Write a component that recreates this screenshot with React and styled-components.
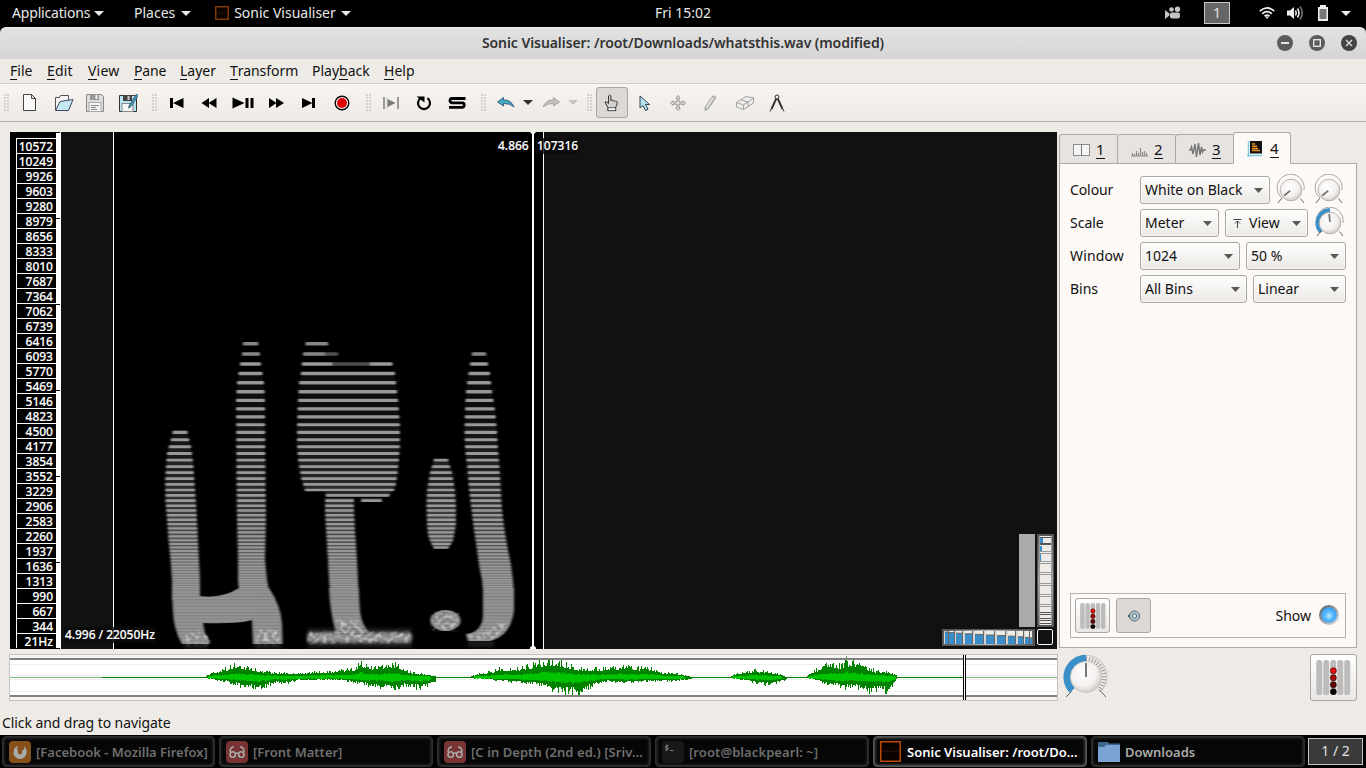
import React from 'react';
import styled, { createGlobalStyle, css } from 'styled-components';

const Global = createGlobalStyle`
  * { box-sizing: border-box; }
  body { margin: 0; background: #eeebe6; overflow: hidden; }
  svg { display: block; flex: none; }
`;

const Desktop = styled.div`
  width: 1366px;
  height: 768px;
  display: flex;
  flex-direction: column;
  background: #eeebe6;
  color: #111;
  font-family: "Noto Sans", "Open Sans", sans-serif;
  font-size: 14px;
  line-height: 20px;
  white-space: nowrap;
`;

/* ---------- desktop top bar ---------- */
const TopBar = styled.header`
  height: 27px;
  flex: none;
  display: grid;
  grid-template-columns: 1fr auto 1fr;
  align-items: center;
  background: #000;
  color: #e8e8e6;
  padding-bottom: 1px;
`;
const TopLeft = styled.div`
  display: flex;
  align-items: center;
  padding-left: 12px;
`;
const TopItem = styled.div`
  display: flex;
  align-items: center;
  justify-content: space-between;
  width: ${p => p.$w}px;
  margin-right: ${p => p.$after || 0}px;
  letter-spacing: ${p => p.$ls || 0}px;
`;
const Clock = styled.div`letter-spacing: 0;`;
const Tray = styled.div`
  display: flex;
  align-items: center;
  justify-content: flex-end;
  padding-right: 15px;
`;
const Workspace = styled.div`
  width: 26px;
  height: 22px;
  margin: 0 29px 0 23px;
  border: 1px solid #c8c8c8;
  background: #666;
  text-align: center;
  line-height: 19px;
`;
const TraySlot = styled.span`margin-left: ${p => p.$gap}px;`;

/* ---------- window chrome ---------- */
const TitleWrap = styled.div`background: #000; flex: none;`;
const TitleBar = styled.div`
  height: 32px;
  display: flex;
  align-items: center;
  justify-content: center;
  position: relative;
  padding: 0 0 2px;
  border-radius: 6px 6px 0 0;
  border-top: 1px solid #efefef;
  background: linear-gradient(#e2e2e2, #d5d5d5);
  color: #333;
  font-weight: 600;
  letter-spacing: ${p => p.$ls}px;
`;
const WindowButtons = styled.div`
  position: absolute;
  right: 9px;
  top: 7px;
  display: flex;
  gap: 16px;
`;
const MenuBar = styled.nav`
  height: 25px;
  flex: none;
  display: flex;
  align-items: center;
  padding-left: 10px;
  border-bottom: 1px solid #d0cdca;
`;
const MenuItem = styled.div`
  width: ${p => p.$w}px;
  letter-spacing: ${p => p.$ls || 0}px;
`;
const Key = styled.span`
  display: inline-block;
  line-height: 17px;
  border-bottom: 1px solid #111;
`;
const ToolBar = styled.div`
  height: 38px;
  flex: none;
  display: flex;
  align-items: center;
  border-bottom: 1px solid #b5b1ad;
  background: linear-gradient(#f8f5f0, #edeae5);
`;
const Tool = styled.div`
  width: ${p => p.$w || 20}px;
  height: 20px;
  margin-left: ${p => p.$gap}px;
  display: flex;
  align-items: center;
  justify-content: center;
  ${p => p.$active && css`
    height: 31px;
    border: 1px solid #a9a5a2;
    border-radius: 3px;
    background: #dcd8d6;
  `}
`;
const Grip = styled.div`
  width: 5px;
  height: 17px;
  margin-left: ${p => p.$gap}px;
  margin-right: 1px;
  background: radial-gradient(circle at 1px 1px, #c2beba 0.6px, transparent 0.9px) 0 0 / 3px 3px;
`;

/* ---------- work area ---------- */
const Work = styled.main`
  flex: none;
  height: 586px;
  display: grid;
  grid-template-columns: 1049px 298px;
  grid-template-rows: 517px 47px;
  column-gap: 1px;
  row-gap: 5px;
  padding: 10px 0 0 9px;
`;
const Pane = styled.section`
  position: relative;
  margin: 0 1px;
  display: flex;
  background: #000;
  font-size: 12px;
  font-weight: 500;
  color: #fff;
`;
const Scale = styled.div`
  width: 46px;
  flex: none;
  border-left: 6px solid #000;
  padding-top: 6px;
  -webkit-text-stroke: 0.15px #fff;
`;
const ScaleRow = styled.div`
  height: 15px;
  border-top: 1px solid #fff;
  border-left: 1px solid #fff;
  padding-right: 3px;
  line-height: 15px;
  text-align: right;
`;
const ScaleEdge = styled.div`
  width: 5px;
  flex: none;
  background: repeating-linear-gradient(#000 0 1px, #fff 1px 86px);
  border-right: 1px solid #fff;
`;
const Overlay = styled.div`
  position: absolute;
  left: ${p => p.$x}px;
  top: ${p => p.$y}px;
  height: 16px;
  line-height: 16px;
  padding: 0 1px;
  background: ${p => p.$bg || 'transparent'};
  letter-spacing: ${p => p.$ls || 0}px;
  -webkit-text-stroke: 0.15px #fff;
`;
const WheelDock = styled.div`
  position: absolute;
  right: 3px;
  bottom: 3px;
  display: grid;
  grid-template-columns: 93px 17px;
  grid-template-rows: 93px 17px;
  gap: 2px;
`;
const ZoomTrack = styled.div`
  width: 16px;
  height: 93px;
  justify-self: end;
  background: #aaaaa8;
`;
const ResetBox = styled.div`
  width: 16px;
  height: 16px;
  border: 1px solid #fff;
  border-radius: 2px;
  background: #111;
`;
const Overview = styled.section`
  height: 47px;
  border: 1px solid #c5c2bf;
  background: #fff;
`;

/* ---------- property side ---------- */
const Side = styled.aside`display: flex; flex-direction: column; height: 516px;`;
const Tabs = styled.div`
  height: 32px;
  display: flex;
  align-items: flex-end;
  position: relative;
  margin-bottom: -1px;
`;
const Tab = styled.div`
  width: 58px;
  height: 30px;
  display: flex;
  align-items: center;
  gap: 6px;
  padding: 1px 0 0 13px;
  border: 1px solid #aeaaa7;
  border-right-width: 0;
  border-radius: 3px 0 0 0;
  background: #e6e3e0;
  font-size: 15px;
  ${p => p.$on && css`
    height: 32px;
    border-right-width: 1px;
    border-bottom-color: #fdf9f7;
    border-radius: 3px 3px 0 0;
    background: #fdf9f7;
  `}
`;
const Panel = styled.div`
  flex: 1;
  display: flex;
  flex-direction: column;
  justify-content: space-between;
  border: 1px solid #aeaaa7;
  background: #fdf9f7;
  padding: 12px 10px 9px;
`;
const Props = styled.div`display: flex; flex-direction: column; gap: 5px;`;
const PropRow = styled.div`
  display: flex;
  align-items: center;
  height: 28px;
`;
const PropName = styled.div`
  width: 70px;
  flex: none;
  letter-spacing: ${p => p.$ls || 0}px;
`;
const Combo = styled.div`
  width: ${p => p.$w}px;
  height: 28px;
  flex: none;
  margin-right: 6px;
  display: flex;
  align-items: center;
  gap: 5px;
  padding: 0 6px 0 4px;
  border: 1px solid #aba7a4;
  border-radius: 3px;
  background: linear-gradient(#fefefd, #ebe9e6);
  box-shadow: inset 0 0 0 1px #fff8;
`;
const ComboText = styled.span`flex: 1;`;
const KnobSlot = styled.div`
  width: 32px;
  height: 32px;
  flex: none;
  margin-right: 6px;
  margin-left: ${p => p.$shift || 0}px;
`;
const LayerBox = styled.div`
  height: 45px;
  display: flex;
  align-items: center;
  gap: 6px;
  padding: 0 5px 0 4px;
  border: 1px solid #b5b1ae;
`;
const PushButton = styled.div`
  width: ${p => p.$s}px;
  height: ${p => p.$s}px;
  display: flex;
  align-items: center;
  justify-content: center;
  border: 1px solid #aba7a4;
  border-radius: 3px;
  background: ${p => (p.$down ? '#dcd8d6' : 'linear-gradient(#fff, #e9e7e5)')};
`;
const ShowText = styled.div`
  margin-left: auto;
  margin-right: 1px;
`;
const BottomRight = styled.div`
  display: flex;
  justify-content: space-between;
  align-items: flex-start;
  padding-left: 3px;
`;
const StatusBar = styled.div`
  height: 27px;
  flex: none;
  padding: 5px 2px 0;
  letter-spacing: -0.08px;
`;

/* ---------- task bar ---------- */
const TaskBar = styled.footer`
  height: 33px;
  flex: none;
  display: flex;
  align-items: center;
  gap: 4px;
  padding-left: 2px;
  background: #000;
`;
const Task = styled.div`
  width: ${p => p.$w || 214}px;
  height: 31px;
  display: flex;
  align-items: center;
  padding-left: 6px;
  gap: ${p => p.$gap || 5}px;
  border: 1px solid ${p => (p.$on ? '#555' : '#2e2e2e')};
  border-radius: 4px;
  box-shadow: inset 0 0 3px 1px ${p => (p.$on ? '#666' : '#3a3a3a')};
  background: #060606;
  color: ${p => p.$color || '#6e6e6e'};
  font-size: 13px;
  font-weight: 600;
  letter-spacing: ${p => p.$ls || 0}px;
  overflow: hidden;
`;
const PageBox = styled.div`
  width: 55px;
  height: 27px;
  margin-left: -1px;
  border: 1px solid #c4c4c4;
  background: #3a3a3a;
  color: #e0e0e0;
  text-align: center;
  line-height: 24px;
`;

/* ---------- small drawings ---------- */
const Down = ({ c = '#5a5754', w = 9, h = 5 }) => (
  <svg width={w} height={h} viewBox="0 0 10 5" preserveAspectRatio="none"><path d="M0 0H10L5 5Z" fill={c} /></svg>
);
const Ico = ({ s = 20, w, children, ...r }) => (
  <svg width={w || s} height={s} viewBox={`0 0 ${w || s} ${s}`} fill="none" {...r}>{children}</svg>
);
const AppIcon = ({ s, c = '#8a3c08' }) => (
  <Ico s={s}>
    <rect x=".75" y=".75" width={s - 1.5} height={s - 1.5} stroke={c} strokeWidth="1.4" fill="#0a0300" />
    <path d={`M2 ${s / 2}H${s - 2}M4 ${s / 2 - 1.5}v3M7 ${s / 2 - 2}v4M10 ${s / 2 - 1.5}v3`} stroke="#2c1206" strokeWidth=".8" />
  </Ico>
);
const WinBtn = ({ children, c = '#5b5b5b' }) => (
  <Ico s={16}><circle cx="8" cy="8" r="8" fill={c} />{children}</Ico>
);

const Knob = ({ blue, angle = 230 }) => {
  const a = ((angle - 90) * Math.PI) / 180;
  return (
    <Ico s={32}>
      <defs>
        <radialGradient id="knobFace" cx=".42" cy=".38" r=".65">
          <stop offset="0" stopColor="#fff" /><stop offset=".65" stopColor="#f3f0ee" /><stop offset="1" stopColor="#ccc8c6" />
        </radialGradient>
      </defs>
      <path d="M7 24A13.5 13.5 0 1 1 29 16" stroke="#aaa6a3" strokeWidth="1" />
      {blue && <path d="M7.4 25A12.8 12.8 0 0 1 16 3.3" stroke="#3a8fc8" strokeWidth="4.4" />}
      <path d="M7 24L3 29M25.500 24.500L29 29" stroke="#555" strokeWidth=".9" />
      <circle cx="16" cy="16" r="10.8" fill="url(#knobFace)" stroke="#aaa6a3" strokeWidth=".8" />
      <path d={`M${16 + Math.cos(a)} ${16 + Math.sin(a)}L${16 + Math.cos(a) * 9} ${16 + Math.sin(a) * 9}`} stroke="#777" strokeWidth="1.8" />
    </Ico>
  );
};

const BigKnob = () => (
  <Ico s={46} w={48}>
    <path d="M9 37A21 21 0 1 1 38.500 37.500" stroke="#bdb9b6" strokeWidth=".8" />
    <path d="M24 5A18.500 18.500 0 0 1 37 36" stroke="#999" strokeWidth="5" strokeDasharray="1 2" />
    <path d="M10.200 36.300A19 19 0 0 1 24 4.200" stroke="#3a8fc8" strokeWidth="7" />
    <circle cx="24" cy="23" r="15.500" fill="url(#knobFace)" stroke="#c5c2bf" strokeWidth=".8" />
    <path d="M9.500 37.500L4 43M37 35.500L44 43" stroke="#555" strokeWidth=".9" />
    <path d="M24 9V23" stroke="#777" strokeWidth="2" />
  </Ico>
);

const Faders = ({ s }) => (
  <svg width={s} height={s} viewBox="0 0 27 27">
    {[0, 1, 2, 3, 4].map(i => <rect key={i} x={0.2 + i * 5.4} y="0" width="4.600" height="27" rx="2" fill="#bdbcbb" />)}
    {['#f01010', '#a80808', '#600404', '#000'].map((c, i) => (
      <circle key={c} cx="13.400" cy={8.3 + i * 5.4} r="2.300" fill={c} stroke="#200" strokeWidth=".5" />
    ))}
  </svg>
);

/* ---------- spectrogram ---------- */
const interp = (pts, x) => {
  if (x < pts[0][0] || x > pts[pts.length - 1][0]) return null;
  for (let i = 1; i < pts.length; i++) {
    if (x <= pts[i][0]) {
      const [p, q] = [pts[i - 1], pts[i]];
      const t = (x - p[0]) / (q[0] - p[0] || 1);
      return p.slice(1).map((v, k) => v + (q[k + 1] - v) * t);
    }
  }
  return null;
};

/* each stroke: [y, left, right] along its height */
const strokes = [
  [[430, 173, 187], [439, 171, 189], [446, 169, 191], [453, 167, 192], [466, 166, 193.5], [482, 165, 194.5], [502, 165.5, 196], [520, 167, 197], [540, 168.5, 198], [560, 170.5, 199], [580, 172, 200], [600, 172, 200]],
  [[342, 243, 258], [354, 242, 260], [364, 240, 261], [383, 237, 264], [400, 236, 265], [480, 236.5, 265.5], [520, 237, 266], [560, 238, 265], [580, 238, 267], [590, 239, 269], [600, 238, 272]],
  [[342, 306, 326], [352, 303, 338], [357, 303, 338], [358, 303, 330], [361.5, 302, 330], [362, 302, 392], [373, 301, 395], [382, 299, 396], [400, 298, 398], [424, 297, 400], [445, 297, 400], [460, 298, 399], [478, 301, 397], [484, 303, 396], [491, 305, 394]],
  [[492, 325, 391], [497, 326, 389]],
  [[498, 325, 354], [510, 325, 354], [530, 326, 355], [560, 328, 357], [580, 329, 358], [600, 331, 359]],
  [[498, 361, 382], [502, 361, 382]],
  [[459, 434, 448], [466, 432, 450], [472, 430, 452], [490, 427, 455], [505, 426.5, 456], [525, 427, 456], [535, 428, 454], [541, 430, 453], [549, 434, 448]],
  [[353, 472, 486], [364, 470, 488], [373, 468.5, 490], [391, 466, 492], [410, 465, 495], [430, 464.5, 497], [450, 465, 498], [465, 467, 499.5], [490, 469, 501], [510, 471.5, 502], [530, 474, 504.5], [550, 477, 508], [565, 479, 511], [580, 482, 513], [600, 484, 514]],
];
const harmonics = Array.from({ length: 50 }, (_, k) => 650.7 - 307 * Math.pow(0.9665, k));
const outline = pts => 'M' + pts.map(p => `${p[1]} ${p[0]}`).join('L') + 'L' + [...pts].reverse().map(p => `${p[2]} ${p[0]}`).join('L') + 'Z';
const lowBodies = [
  'M172 588L200 588L200 596Q222 599 239 588L269 588Q281 606 282 624L282.500 644L253 644L252 620Q238 624 203 623L205 634L210 641L209 644L182 644Q174 630 173 612Z',
  'M329 588L358.500 588L360 612Q362 626 370 633L336 633Q330 612 329 588Z',
  'M483 588L514 588L514 610Q511 636 490 641L468 641L466 634Q484 632 483 612Z',
];

const Spectrogram = () => (
  <svg width="996" height="517" viewBox="61 132 996 517">
    <defs>
      <filter id="soft" x="-5%" y="-5%" width="110%" height="110%"><feGaussianBlur stdDeviation="1.200 0.750" /></filter>
      <filter id="glow" x="-5%" y="-30%" width="110%" height="160%"><feGaussianBlur stdDeviation="1.400 1.700" /></filter>
      <filter id="grain" x="-5%" y="-20%" width="110%" height="140%">
        <feTurbulence type="fractalNoise" baseFrequency=".22 .26" numOctaves="1" seed="7" result="n" />
        <feColorMatrix in="n" type="matrix" values="0 0 0 0 .85  0 0 0 0 .85  0 0 0 0 .85  3 0 0 0 -1.250" result="m" />
        <feGaussianBlur in="SourceGraphic" stdDeviation="1.800" result="s" />
        <feComposite in="m" in2="s" operator="in" />
        <feGaussianBlur stdDeviation=".4" />
      </filter>
      <linearGradient id="fade" gradientUnits="userSpaceOnUse" x1="0" y1="340" x2="0" y2="600">
        <stop offset="0" stopColor="#000" /><stop offset=".3" stopColor="#101010" /><stop offset=".6" stopColor="#2c2c2c" />
        <stop offset=".8" stopColor="#5a5a5a" /><stop offset="1" stopColor="#8e8e8e" />
      </linearGradient>
      <pattern id="ripple" width="4" height="3.200" patternUnits="userSpaceOnUse">
        <path d="M0 1Q2 2.800 4 1" stroke="#555" strokeWidth=".8" fill="none" />
      </pattern>
    </defs>
    <rect x="61" y="132" width="996" height="517" fill="#111" />
    <rect x="113" y="132" width="430" height="517" fill="#000" />
    <g filter="url(#soft)">
      {strokes.map((s, i) => <path key={i} d={outline(s)} fill="url(#fade)" />)}
      {strokes.map((s, i) => harmonics.map((y, k) => {
        const e = interp(s, y);
        if (!e) return null;
        const thick = Math.max(1.2, 3.6 - k * 0.05);
        return <rect key={`${i}-${k}`} x={e[0]} y={y - thick / 2} width={e[1] - e[0]} height={thick} rx="1" fill={k < 2 ? '#868686' : '#989898'} />;
      }))}
      <rect x="332" y="361" width="38" height="5.500" fill="#000" opacity=".5" />
      <rect x="325" y="351.500" width="15" height="5" fill="#000" opacity=".4" />
      {lowBodies.map(d => <path key={d} d={d} fill="#949494" />)}
      <ellipse cx="445.500" cy="620.500" rx="15" ry="10.500" fill="#8c8c8c" />
    </g>
    <g opacity=".5">
      {lowBodies.map(d => <path key={d} d={d} fill="url(#ripple)" />)}
      <ellipse cx="445.500" cy="620.500" rx="13" ry="8.500" fill="url(#ripple)" />
    </g>
    <g filter="url(#glow)">
      <rect x="307" y="632.500" width="105" height="10" rx="4" fill="#8c8c8c" />
      <path d="M308 628h104v4h-104zM308 643h104v5h-104zM184 643h24v6h-24zM254 643h28v6h-28zM468 641h26v6h-26z" fill="#555" opacity=".3" />
    </g>
    <g filter="url(#grain)" opacity=".6">
      <path d="M308 632h103v11h-103zM184 632h20l5 6v6h-24zM256 630h23v14h-23zM336 620h20l10 12h-28zM468 635q20-1 30-12h10q-8 14-18 17h-20zM432 612h26v18h-26z" fill="#fff" />
    </g>
    <path d="M113.500 132V649M543.500 132V649" stroke="#fff" />
    <path d="M533 132V649" stroke="#fff" strokeWidth="2" />
    <path d="M530 132h6l-3 3zM530 649v-1.500l3-2.500 3 2.500v1.500z" fill="#fff" />
  </svg>
);

/* ---------- overview waveform ---------- */
const upEnv = [[205, 1], [213, 5], [220, 7], [232, 11], [237, 14], [245, 11], [252, 9], [262, 6], [275, 5], [290, 4], [305, 4], [312, 6], [330, 6], [345, 8], [355, 9], [361, 17], [365, 12], [378, 11], [390, 14], [398, 14], [402, 8], [415, 4], [425, 3], [436, 1], [470, 1], [480, 4], [490, 6], [500, 9], [515, 9], [530, 12], [547, 17], [560, 16], [575, 10], [590, 9], [605, 9], [620, 12], [635, 10], [650, 10], [662, 5], [675, 4], [690, 1], [730, 1], [740, 5], [755, 7], [770, 5], [785, 1], [806, 1], [815, 7], [826, 14], [840, 13], [846, 17], [847, 21], [848, 15], [852, 17], [862, 12], [875, 7], [890, 5], [897, 1]];
const downEnv = [[205, 1], [210, 1], [225, 4], [245, 10], [258, 12], [275, 5], [285, 6], [300, 2], [340, 2], [360, 6], [370, 9], [380, 10], [395, 13], [405, 8], [420, 11], [435, 6], [436, 1], [480, 1], [500, 3], [520, 5], [540, 8], [555, 14], [578, 17], [590, 10], [605, 4], [625, 5], [640, 5], [650, 3], [665, 4], [685, 2], [692, 1], [735, 1], [750, 4], [765, 7], [775, 6], [787, 1], [812, 1], [825, 6], [847, 11], [860, 11], [868, 16], [880, 12], [887, 16], [892, 8], [897, 1]];
let seed = 11;
const rnd = () => { seed = (seed * 16807) % 2147483647; return seed / 2147483647; };
let outer = '', inner = '';
for (let x = 205; x < 897; x++) {
  const u = interp(upEnv, x)[0], d = interp(downEnv, x)[0];
  const uu = u <= 1.1 ? 0.4 : u * 1.15 * (0.55 + 0.45 * Math.pow(rnd(), 1.8));
  const dd = d <= 1.1 ? 0.4 : d * 1.15 * (0.5 + 0.5 * Math.pow(rnd(), 1.8));
  outer += `M${x + 0.5} ${Math.round(677 - uu)}V${Math.round(678 + dd)}`;
  if (u > 2) inner += `M${x + 0.5} ${Math.round(677 - u * (0.2 + 0.12 * rnd()))}V${Math.round(678 + Math.max(d, 2) * (0.2 + 0.15 * rnd()))}`;
}
const WaveOverview = () => (
  <svg width="1047" height="45" viewBox="10 655 1047 45">
    <path d="M10 664.500H1057M10 675.500H1057M10 679.500H1057M10 691.500H1057" stroke="#eee" />
    <path d="M10 677.500H102M966 677.500H1057" stroke="#7ab87a" />
    <path d="M102 677.500H964" stroke="#007a00" />
    <path d={outer} stroke="#008200" />
    <path d={inner} stroke="#00c400" />
    <path d="M10 655h1047v3h-1047zM10 697h1047v3h-1047z" fill="#f5f4f3" />
    <path d="M846.500 656v4" stroke="#5aa85a" />
    <path d="M10 659H1057M10 696H1057" stroke="#808080" strokeWidth="2" />
    <rect x="963" y="655" width="3" height="45" fill="#fff" />
    <path d="M963.500 655V700M965.500 655V700" stroke="#000" />
  </svg>
);

/* ---------- thumb wheels ---------- */
const hCells = [[3, 3], [7, 5], [14, 6], [23, 7], [33, 8], [44, 8], [55, 8], [66, 7], [76, 5], [83, 4], [88, 2]];
const WheelH = () => (
  <Ico s={17} w={93}>
    <defs><linearGradient id="rimH"><stop offset="0" stopColor="#555" /><stop offset=".5" stopColor="#bbb" /><stop offset="1" stopColor="#555" /></linearGradient></defs>
    <rect x=".5" y=".5" width="92" height="16" fill="url(#rimH)" stroke="#555" />
    <rect x="2" y="2" width="89" height="13" fill="#d8d5d0" />
    {hCells.map(([x, w], i) => (
      <g key={x}>
        <rect x={x} y={2} width={w} height="13" fill="#eeebe6" />
        <rect x={x} y={3 + i * 0.6} width={w} height={12 - i * 0.6} fill="#3a8fc8" />
        <path d={`M${x} ${3 + i * 0.6}h${w}M${x + w + 0.5} 2v13`} stroke="#666" />
      </g>
    ))}
  </Ico>
);
const vRows = [3, 9, 10, 17, 19, 27, 29, 38, 40, 49, 51, 60, 62, 70, 72, 78, 80, 84, 86, 89];
const WheelV = () => (
  <Ico s={93} w={17}>
    <defs><linearGradient id="rimV" x2="0" y2="1"><stop offset="0" stopColor="#555" /><stop offset=".5" stopColor="#aaa" /><stop offset="1" stopColor="#555" /></linearGradient></defs>
    <rect x=".5" y=".5" width="16" height="92" fill="url(#rimV)" stroke="#555" />
    <rect x="2" y="2" width="13" height="89" fill="#eeebe6" />
    <path d="M2 4h4v5h-4zM2 12h3v5h-3zM2 20h2v7h-2z" fill="#3a8fc8" />
    {vRows.map(y => <path key={y} d={`M2 ${y + 0.5}h13`} stroke={y > 76 || y < 11 ? '#555' : '#999'} />)}
    <path d="M2.500 2v89M14.500 2v89" stroke="#999" />
  </Ico>
);

const freqs = '10572 10249 9926 9603 9280 8979 8656 8333 8010 7687 7364 7062 6739 6416 6093 5770 5469 5146 4823 4500 4177 3854 3552 3229 2906 2583 2260 1937 1636 1313 990 667 344 21Hz'.split(' ');

const Reader = () => (
  <Ico s={22}>
    <rect width="22" height="22" rx="4" fill="#783434" />
    <path d="M4 11Q4 6 8 6M18 11Q18 6 14 6M9.500 12.500Q11 11.500 12.500 12.500" stroke="#aaa" strokeWidth="1.500" />
    <circle cx="6.700" cy="13.500" r="2.700" stroke="#aaa" strokeWidth="1.600" /><circle cx="15.300" cy="13.500" r="2.700" stroke="#aaa" strokeWidth="1.600" />
  </Ico>
);

export default function App() {
  return (
    <Desktop>
      <Global />
      <TopBar>
        <TopLeft>
          <TopItem $w={92} $after={30} $ls={-0.18}>Applications<Down c="#e8e8e6" w={10} /></TopItem>
          <TopItem $w={57} $after={24}>Places<Down c="#e8e8e6" w={10} /></TopItem>
          <TopItem $w={136}><AppIcon s={14} />Sonic Visualiser<Down c="#e8e8e6" w={10} /></TopItem>
        </TopLeft>
        <Clock>Fri 15:02</Clock>
        <Tray>
          <Ico s={14} w={16}>
            <circle cx="6.500" cy="3.500" r="2.300" fill="#c4c4c4" /><circle cx="12.500" cy="3.200" r="2.700" fill="#c4c4c4" />
            <rect x="5" y="6.500" width="10" height="6" rx="2" fill="#c4c4c4" /><path d="M0 4l4.500 3.500v2L0 13z" fill="#c4c4c4" />
          </Ico>
          <Workspace>1</Workspace>
          <Ico s={14} w={16}>
            <path d="M.8 5.200Q8-1.500 15.200 5.200M3.200 7.800Q8 3.500 12.800 7.800M5.500 10.200Q8 8 10.500 10.200" stroke="#eee" strokeWidth="1.700" />
            <path d="M6 10.500h4L8 13z" fill="#eee" />
          </Ico>
          <TraySlot $gap={12}>
            <Ico s={16} w={17}>
              <path d="M0 5.500h3L7 2v12L3 10.500H0z" fill="#eee" />
              <path d="M8.500 5.500Q10 8 8.500 10.500M10.500 3.500Q13.500 8 10.500 12.500" stroke="#eee" strokeWidth="1.600" />
              <path d="M13 1.500Q17.500 8 13 14.500" stroke="#777" strokeWidth="1.500" />
            </Ico>
          </TraySlot>
          <TraySlot $gap={13}>
            <Ico s={16} w={12}>
              <path d="M3 0h6v2h2v14H1V2h2z" fill="#eee" /><rect x="2.500" y="4" width="7" height="10" rx="1" fill="#777" />
            </Ico>
          </TraySlot>
          <TraySlot $gap={12}><Down c="#eee" w={10} /></TraySlot>
        </Tray>
      </TopBar>
      <TitleWrap>
        <TitleBar $ls={-0.07}>
          Sonic Visualiser: /root/Downloads/whatsthis.wav (modified)
          <WindowButtons>
            <WinBtn><path d="M4 8h8" stroke="#e4e4e4" strokeWidth="2" /></WinBtn>
            <WinBtn><rect x="4.700" y="4.700" width="6.600" height="6.600" stroke="#e4e4e4" strokeWidth="1.400" /></WinBtn>
            <WinBtn c="#444"><path d="M5 5l6 6M11 5l-6 6" stroke="#e4e4e4" strokeWidth="1.300" /></WinBtn>
          </WindowButtons>
        </TitleBar>
      </TitleWrap>
      <MenuBar>
        <MenuItem $w={37}><Key>F</Key>ile</MenuItem>
        <MenuItem $w={41} $ls={0.15}><Key>E</Key>dit</MenuItem>
        <MenuItem $w={46} $ls={0.2}><Key>V</Key>iew</MenuItem>
        <MenuItem $w={46} $ls={-0.2}><Key>P</Key>ane</MenuItem>
        <MenuItem $w={50}><Key>L</Key>ayer</MenuItem>
        <MenuItem $w={82} $ls={-0.05}><Key>T</Key>ransform</MenuItem>
        <MenuItem $w={72}>Play<Key>b</Key>ack</MenuItem>
        <MenuItem $w={40}><Key>H</Key>elp</MenuItem>
      </MenuBar>
      <ToolBar>
        <Grip $gap={4} />
        <Tool $gap={10}><Ico><path d="M3.500 1.500h8l4 4v12h-12zM11.500 1.500v4h4" fill="#fafafa" stroke="#444" /></Ico></Tool>
        <Tool $gap={14}><Ico><path d="M1.500 17V4.500h4l1-2h8V7" fill="#f5f5f5" stroke="#555" /><path d="M1.500 17.500l4.500-9 13-2-4.500 11z" fill="#c3e9f3" stroke="#446" /></Ico></Tool>
        <Tool $gap={11}><Ico><path d="M1.500 1.500h15l2 2v15h-17z" fill="#ddd" stroke="#888" /><rect x="5" y="1" width="9" height="6" fill="#999" /><rect x="10.500" y="2" width="2" height="4" fill="#eee" /><rect x="4" y="9.500" width="12" height="9" fill="#f6f6f6" stroke="#aaa" /><path d="M6 12.500h8M6 14.500h5M6 16.500h6" stroke="#888" /></Ico></Tool>
        <Tool $gap={13}><Ico><path d="M1.500 2.500h15l2 2v14h-17z" fill="#b6e4f0" stroke="#333" /><rect x="5" y="2" width="9" height="6" fill="#444" /><rect x="9.500" y="3" width="2" height="4" fill="#ccc" /><rect x="4" y="10.500" width="11" height="8" fill="#f6f6f6" stroke="#888" /><path d="M18.500 1l-7 11-1 3 3-2 6.500-10.500z" fill="#4aa6cc" stroke="#245" strokeWidth=".8" /></Ico></Tool>
        <Grip $gap={14} />
        <Tool $gap={9}><Ico><path d="M3 5h3v10H3zM16.500 5v10L6 10z" fill="#000" /></Ico></Tool>
        <Tool $gap={12}><Ico><path d="M10 5v10L2.500 10zM17.500 5v10L9.500 10z" fill="#000" /></Ico></Tool>
        <Tool $gap={12} $w={24}><Ico w={24}><path d="M1.500 4.500L13.500 10 1.500 15.500zM14.500 5h3v10h-3zM19.500 5h3v10h-3z" fill="#000" /></Ico></Tool>
        <Tool $gap={11}><Ico><path d="M3 5v10l7.500-5zM10 5v10l8-5z" fill="#000" /></Ico></Tool>
        <Tool $gap={12}><Ico><path d="M4 5v10l10.500-5zM14 5h3v10h-3z" fill="#000" /></Ico></Tool>
        <Tool $gap={14}><Ico><circle cx="10" cy="10" r="6.800" fill="#fff" stroke="#000" strokeWidth="1.400" /><circle cx="10" cy="10" r="5" fill="#e00000" /></Ico></Tool>
        <Grip $gap={14} />
        <Tool $gap={9}><Ico><path d="M3 4v12M17 4v12" stroke="#999" strokeWidth="2" /><path d="M6 4v12" stroke="#ccc" /><path d="M6.500 6v8l8-4z" fill="#777" /></Ico></Tool>
        <Tool $gap={13}><Ico><path d="M6.500 5.200A6 6 0 1 0 13.500 5.200" stroke="#000" strokeWidth="2.200" /><path d="M2.500 3.500h8v6z" fill="#000" /></Ico></Tool>
        <Tool $gap={13}><Ico><path d="M18.500 5.500H5Q3 5.500 3 7.600T5 9.900H15.500Q17.200 9.900 17.200 12T15.500 14.300H2" stroke="#000" strokeWidth="2.800" /></Ico></Tool>
        <Grip $gap={14} />
        <Tool $gap={9}><Ico><path d="M1.500 9l6-4.500v2.500Q15 6.500 18 14 13.500 10 7.500 10.500V13z" fill="#45afc9" stroke="#246" strokeWidth=".8" /></Ico></Tool>
        <Tool $gap={7} $w={10}><Down c="#333" w={10} /></Tool>
        <Tool $gap={8}><Ico><path d="M18.500 9l-6-4.500v2.500Q5 6.500 2 14 6.500 10 12.500 10.500V13z" fill="#c4c2bf" stroke="#999" strokeWidth=".8" /></Ico></Tool>
        <Tool $gap={7} $w={10}><Down c="#c5c3c0" w={10} /></Tool>
        <Grip $gap={9} />
        <Tool $gap={3} $w={32} $active><Ico><path d="M6 17.500v-3L3.500 10.500q-1-2 .5-2l2.500 2V3q1.200-2 2.400 0v4.500q1.800-1 2.400.4 1.700-.8 2.200.5 1.700-.4 1.800 1.100-.2 3-1.800 5v3z" fill="#d4d0ce" stroke="#333" /><rect x="6" y="14.800" width="7.800" height="2.900" fill="#fff" stroke="#333" strokeWidth=".8" /></Ico></Tool>
        <Tool $gap={6}><Ico><path d="M6 3v12l3-2.500 2.500 5 2.500-1.200-2.500-4.800h4z" fill="#b6e4f0" stroke="#345" /></Ico></Tool>
        <Tool $gap={14}><Ico><path d="M10 2.500l2 2.500h-1v4h4v-1.200l2.500 2.200-2.500 2.200V11h-4v4h1.200L10 17.500 7.800 15H9v-4H5v1.200L2.500 10 5 7.800V9h4V5H8z" fill="#e8e6e3" stroke="#8b8885" strokeWidth=".9" /></Ico></Tool>
        <Tool $gap={12}><Ico><path d="M14.500 3Q16.500 4 15 6L8 16l-3 1.500.3-3.500L12 4q1-1.500 2.500-1z" fill="#ccc" stroke="#999" /><path d="M12.500 5L6.500 14" stroke="#f5f5f5" /></Ico></Tool>
        <Tool $gap={15}><Ico><path d="M1.500 9.500L11 3.500l7.500 1.500v5L8.500 16.500l-7-2.500zM1.500 9.500l7 2.500 10-7M8.500 12v4.500M6 6.800l7 2.200v4" fill="#eee" stroke="#999" strokeWidth=".9" /></Ico></Tool>
        <Tool $gap={12}><Ico><path d="M9.500 5L4.500 16M10.500 5l5 11" stroke="#333" strokeWidth="1.900" /><path d="M3 18.500l1.500-3M17 18.500l-1.500-3" stroke="#333" /><circle cx="10" cy="4" r="2" fill="#eee" stroke="#333" /></Ico></Tool>
      </ToolBar>
      <Work>
        <Pane>
          <Scale>{freqs.map(f => <ScaleRow key={f}>{f}</ScaleRow>)}</Scale>
          <ScaleEdge />
          <Spectrogram />
          <Overlay $x={487} $y={6}>4.866</Overlay>
          <Overlay $x={526} $y={6} $bg="#0a0a0acc">107316</Overlay>
          <Overlay $x={54} $y={495} $bg="#0a0a0acc" $ls={-0.05}>4.996 / 22050Hz</Overlay>
          <WheelDock>
            <ZoomTrack />
            <WheelV />
            <WheelH />
            <ResetBox />
          </WheelDock>
        </Pane>
        <Side>
          <Tabs>
            <Tab><Ico s={16} w={17}><rect x=".5" y="2.500" width="16" height="11" fill="#f4f4f4" stroke="#8c8c8c" /><path d="M8.500 2v12" stroke="#777" /></Ico><Key>1</Key></Tab>
            <Tab><Ico s={16} w={17}><path d="M1.500 11v3M3.500 12v2M5.500 9v5M7.500 11v3M9.500 6v8M11.500 10v4M13.500 9v5M15.500 11v3M0 14h17" stroke="#8c8c8c" strokeWidth="1.200" /></Ico><Key>2</Key></Tab>
            <Tab><Ico s={16} w={17}><path d="M0 8h1.500l1-3 1.500 7 2-10 1.500 13L9.500 1l1.500 12 1.500-8 1 5 1-2H17" stroke="#777" strokeWidth="1.400" /></Ico><Key>3</Key></Tab>
            <Tab $on><Ico s={16} w={17}><path d="M1.500 0v16M0 14.500h15" stroke="#7fcbe0" strokeWidth="1.400" /><rect x="3" y="0" width="12" height="12.500" fill="#111" /><path d="M5 3h3M5 5.200h5M5 7.400h6M5 9.600h8" stroke="#e8901c" strokeWidth="1.500" /></Ico><Key>4</Key></Tab>
          </Tabs>
          <Panel>
            <Props>
              <PropRow><PropName $ls={-0.1}>Colour</PropName><Combo $w={130}><ComboText>White on Black</ComboText><Down /></Combo><KnobSlot $shift={-1}><Knob /></KnobSlot><KnobSlot><Knob /></KnobSlot></PropRow>
              <PropRow>
                <PropName>Scale</PropName><Combo $w={79}><ComboText>Meter</ComboText><Down /></Combo>
                <Combo $w={83}><Ico s={12} w={14}><path d="M3.500 2.500h8M7.500 4v7M5 6.500L7.500 4l2.500 2.500" stroke="#333" strokeWidth=".9" /></Ico><ComboText>View</ComboText><Down /></Combo>
                <KnobSlot><Knob blue angle={-5} /></KnobSlot>
              </PropRow>
              <PropRow><PropName $ls={0.15}>Window</PropName><Combo $w={100}><ComboText>1024</ComboText><Down /></Combo><Combo $w={100}><ComboText>50 %</ComboText><Down /></Combo></PropRow>
              <PropRow><PropName>Bins</PropName><Combo $w={107}><ComboText>All Bins</ComboText><Down /></Combo><Combo $w={93}><ComboText>Linear</ComboText><Down /></Combo></PropRow>
            </Props>
            <LayerBox>
              <PushButton $s={35}><Faders s={26} /></PushButton>
              <PushButton $s={35} $down><Ico s={14}><path d="M1 7l5-5v10z" fill="#8aa" stroke="#456" /><circle cx="7.500" cy="7" r="5" fill="#b7ccd2" stroke="#567" /><circle cx="7.500" cy="7" r="2.200" fill="#dee" stroke="#567" /></Ico></PushButton>
              <ShowText>Show</ShowText>
              <Ico s={22}>
                <defs><radialGradient id="led" cx=".5" cy=".55" r=".5"><stop offset="0" stopColor="#c8f0ff" /><stop offset=".45" stopColor="#62bfff" /><stop offset="1" stopColor="#3aa0f0" /></radialGradient>
                  <linearGradient id="ledRim" x2="1" y2="1"><stop offset="0" stopColor="#555" /><stop offset="1" stopColor="#e8e8e8" /></linearGradient></defs>
                <circle cx="11" cy="10" r="10" fill="url(#ledRim)" /><circle cx="11" cy="10" r="7.800" fill="url(#led)" />
              </Ico>
            </LayerBox>
          </Panel>
        </Side>
        <Overview><WaveOverview /></Overview>
        <BottomRight><BigKnob /><PushButton $s={47}><Faders s={35} /></PushButton></BottomRight>
      </Work>
      <StatusBar>Click and drag to navigate</StatusBar>
      <TaskBar>
        <Task $w={213}><Ico s={22}><rect width="22" height="22" rx="4" fill="#86501c" /><path d="M9 5Q5 6 4.500 11A6.500 6.500 0 0 0 17.500 12Q18 8 15 5 16 9 13 9.500 14 13 11 13.500 8 13 9 9.500 7 8 9 5z" fill="#aaa" /></Ico>[Facebook - Mozilla Firefox]</Task>
        <Task><Reader />[Front Matter]</Task>
        <Task $ls={0.06}><Reader />[C in Depth (2nd ed.) [Sriv…</Task>
        <Task $ls={0.08}><Ico s={22}><rect width="22" height="22" rx="4" fill="#181818" /><path d="M6.500 4.500Q3 4.500 3.500 6T6 7.200 4.500 9H3M4.800 3.500V10M8 9.500h3.500" stroke="#888" strokeWidth=".9" /></Ico>[root@blackpearl: ~]</Task>
        <Task $on $color="#fff" $gap={6}><AppIcon s={21} c="#c64f08" />Sonic Visualiser: /root/Do…</Task>
        <Task $color="#aaa"><Ico s={22}><path d="M0 1h10l1 1.500h11V7H0z" fill="#3c6890" /><path d="M0 6h6l2-2h14v17H0z" fill="#7ba3d4" /></Ico>Downloads</Task>
        <PageBox>1 / 2</PageBox>
      </TaskBar>
    </Desktop>
  );
}
